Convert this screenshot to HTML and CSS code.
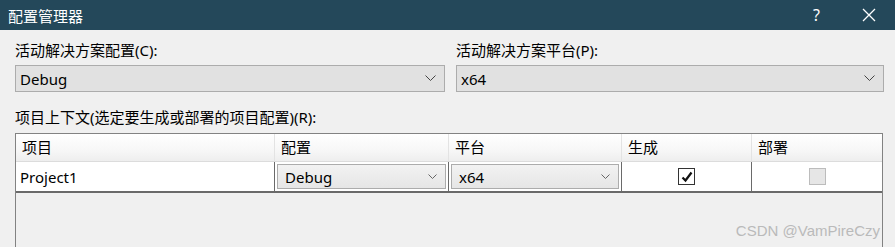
FILE: index.html
```html
<!DOCTYPE html>
<html lang="zh-CN">

<head>
    <meta charset="UTF-8">
    <meta name="viewport" content="width=device-width, initial-scale=1.0">
    <title>配置管理器</title>
    <link rel="stylesheet" href="styles.css">
</head>

<body>
    <div class="titlebar">
        <span class="title">配置管理器</span>
        <div class="ctrls">
            <span class="help">?</span>
            <svg class="close" width="14" height="14" viewBox="0 0 14 14">
                <path d="M1 1L13 13M13 1L1 13" stroke="#fff" stroke-width="1.3" fill="none" />
            </svg>
        </div>
    </div>

    <div class="content">
        <div class="selectors">
            <div class="field">
                <p class="label">活动解决方案配置(C):</p>
                <div class="combo">
                    <span>Debug</span>
                    <svg width="11" height="7" viewBox="0 0 11 7"><path d="M0.5 0.5L5.5 5.5L10.5 0.5" stroke="#444" fill="none" /></svg>
                </div>
            </div>
            <div class="field">
                <p class="label">活动解决方案平台(P):</p>
                <div class="combo">
                    <span>x64</span>
                    <svg width="11" height="7" viewBox="0 0 11 7"><path d="M0.5 0.5L5.5 5.5L10.5 0.5" stroke="#444" fill="none" /></svg>
                </div>
            </div>
        </div>

        <p class="label ctx">项目上下文(选定要生成或部署的项目配置)(R):</p>

        <div class="grid">
            <div class="row head">
                <div class="cell">项目</div>
                <div class="cell">配置</div>
                <div class="cell">平台</div>
                <div class="cell">生成</div>
                <div class="cell">部署</div>
            </div>
            <div class="row data">
                <div class="cell">Project1</div>
                <div class="cell">
                    <div class="cell-combo">
                        <span>Debug</span>
                        <svg width="9" height="5" viewBox="0 0 9 5"><path d="M0.5 0.5L4.5 4.5L8.5 0.5" stroke="#666" fill="none" /></svg>
                    </div>
                </div>
                <div class="cell">
                    <div class="cell-combo">
                        <span>x64</span>
                        <svg width="9" height="5" viewBox="0 0 9 5"><path d="M0.5 0.5L4.5 4.5L8.5 0.5" stroke="#666" fill="none" /></svg>
                    </div>
                </div>
                <div class="cell center">
                    <span class="check">
                        <svg width="14" height="14" viewBox="0 0 14 14"><path d="M2.5 7.5L5.5 10.5L11.5 2.5" stroke="#111" stroke-width="2.2" fill="none" /></svg>
                    </span>
                </div>
                <div class="cell center">
                    <span class="check off"></span>
                </div>
            </div>
            <span class="watermark">CSDN @VamPireCzy</span>
        </div>
    </div>
</body>

</html>
```

FILE: styles.css
```css
* {
    margin: 0;
    padding: 0;
    box-sizing: border-box;
}

body {
    background-color: #f0f0f0;
    font-family: "Noto Sans", "Noto Sans CJK SC", sans-serif;
    font-size: 15px;
    color: #000;
    overflow: hidden;
}

.titlebar {
    height: 30px;
    background-color: #24485a;
    color: #fff;
    display: flex;
    align-items: center;
    justify-content: space-between;
    padding-left: 8px;
}

.title {
    font-size: 15px;
}

.ctrls {
    display: flex;
    align-items: center;
    gap: 42px;
    padding-right: 19px;
}

.help {
    font-size: 16px;
}

.content {
    padding: 10px 12px 0 15px;
}

.selectors {
    display: grid;
    grid-template-columns: 430px 428px;
    gap: 11px;
}

.label {
    line-height: 20px;
    height: 20px;
}

.combo {
    margin-top: 5px;
    height: 27px;
    border: 1px solid #acacac;
    background-color: #e1e1e1;
    display: flex;
    align-items: center;
    justify-content: space-between;
    padding: 0 8px 0 4px;
}

.ctx {
    margin-top: 15px;
}

.grid {
    position: relative;
    margin-top: 6px;
    height: 114px;
    border: 1px solid #828282;
    border-bottom: none;
}

.row {
    display: grid;
    grid-template-columns: 259px 174px 173px 130px 1fr;
}

.head {
    height: 28px;
    background: linear-gradient(#ffffff, #f7f7f7 60%, #eeeeee);
    border-bottom: 1px solid #dcdcdc;
}

.head .cell {
    border-right: 1px solid #e3e3e3;
    padding-left: 6px;
    line-height: 27px;
}

.data {
    height: 31px;
    background-color: #fff;
    border-bottom: 2px solid #6a6a6a;
}

.data .cell {
    border-right: 1px solid #6a6a6a;
    display: flex;
    align-items: center;
    padding-left: 4px;
}

.head .cell:last-child,
.data .cell:last-child {
    border-right: none;
}

.data .cell:nth-child(2),
.data .cell:nth-child(3) {
    padding: 2px;
}

.cell-combo {
    width: 100%;
    height: 100%;
    border: 1px solid #acacac;
    background: linear-gradient(#f2f2f2, #e6e6e6);
    display: flex;
    align-items: center;
    justify-content: space-between;
    padding: 0 8px 0 7px;
}

.center {
    justify-content: center;
}

.data .cell.center {
    padding-left: 0;
}

.check {
    width: 17px;
    height: 17px;
    border: 1px solid #333;
    background-color: #fff;
    display: flex;
    align-items: center;
    justify-content: center;
}

.check.off {
    border-color: #bcbcbc;
    background-color: #e6e6e6;
}

.watermark {
    position: absolute;
    right: 2px;
    top: 88px;
    font-family: "Liberation Sans", sans-serif;
    font-size: 15px;
    color: #bababa;
}
```
